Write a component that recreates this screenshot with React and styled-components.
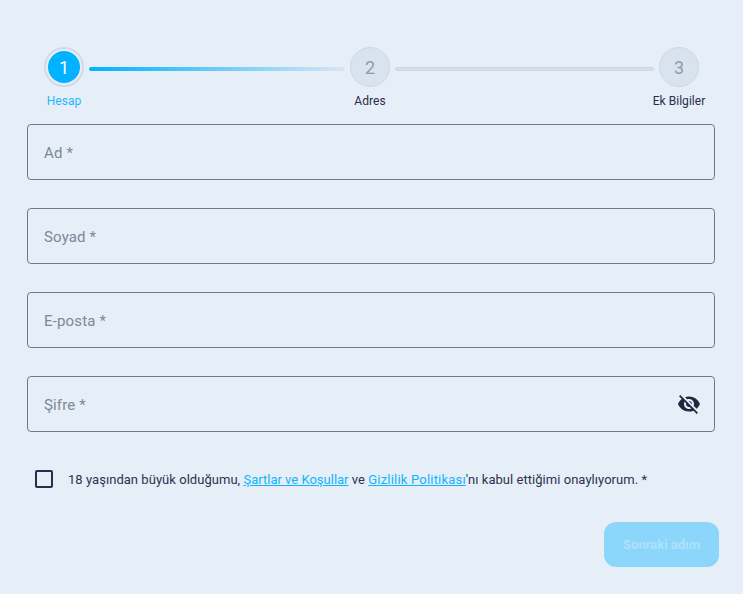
import React from 'react';
import styled, { createGlobalStyle } from 'styled-components';

const GlobalStyle = createGlobalStyle`
body {
  margin: 0;
  background: #e6eef8;
  font-family: Roboto, "Liberation Sans", sans-serif;
}
`;

const Page = styled.div`
  width: 743px;
  height: 594px;
  padding: 47px 28px 0 27px;
  box-sizing: border-box;
  overflow: hidden;
`;

const Stepper = styled.div`
  display: flex;
  align-items: flex-start;
  padding: 0 16px 0 17px;
  height: 77px;
`;

const Step = styled.div`
  width: 40px;
  display: flex;
  flex-direction: column;
  align-items: center;
  flex: none;
`;

const Circle = styled.div`
  width: 40px;
  height: 40px;
  box-sizing: border-box;
  border-radius: 50%;
  display: flex;
  align-items: center;
  justify-content: center;
  font-size: 18px;
  color: ${(props) => (props.$active ? '#fff' : '#8e9bb0')};
  border: ${(props) => (props.$active ? '2px solid #d0dbe7' : '1px solid #ccd8e5')};
  background-color: ${(props) => (props.$active ? '#00b2ff' : '#d8e3ef')};
  background-clip: ${(props) => (props.$active ? 'content-box' : 'border-box')};
  padding: ${(props) => (props.$active ? '2px' : '0')};
`;

const StepLabel = styled.div`
  margin-top: 6px;
  font-size: 12px;
  line-height: 16px;
  letter-spacing: 0.05px;
  white-space: nowrap;
  color: ${(props) => (props.$active ? '#1fb8ff' : '#2b2d4b')};
`;

const Connector = styled.div`
  width: ${(props) => props.$width}px;
  flex: none;
  height: 4px;
  margin: 20px 5px 0;
  border-radius: 2px;
  background: ${(props) =>
    props.$active ? 'linear-gradient(90deg, #00b2ff, #d8e5f1)' : '#d3dfeb'};
  border: ${(props) => (props.$active ? 'none' : '1px solid #ccd8e5')};
  box-sizing: border-box;
`;

const Form = styled.form`
  display: flex;
  flex-direction: column;
  gap: 28px;
`;

const Field = styled.div`
  height: 56px;
  box-sizing: border-box;
  border: 1px solid #73758f;
  border-radius: 4px;
  display: flex;
  align-items: center;
  justify-content: space-between;
  padding: 2px 13px 0 16px;
`;

const Placeholder = styled.span`
  font-size: 15px;
  letter-spacing: 0.15px;
  color: #7e8896;
`;

const EyeIcon = styled.svg`
  width: 24px;
  height: 24px;
  margin-top: -2px;
  fill: #23263f;
`;

const ConsentRow = styled.div`
  display: flex;
  align-items: center;
  margin-top: 10px;
  padding-left: 8px;
  font-size: 13px;
  letter-spacing: 0.04px;
  color: #2f3150;
`;

const Checkbox = styled.span`
  width: 18px;
  height: 18px;
  box-sizing: border-box;
  border: 2px solid #2b2d4b;
  border-radius: 2px;
  margin-right: 15px;
  flex: none;
`;

const TermsLink = styled.a`
  color: #0fb5ff;
  text-decoration: underline;
  letter-spacing: ${(props) => props.$spacing || 0}px;
`;

const Actions = styled.div`
  display: flex;
  justify-content: flex-end;
  margin: 6px -4px 0 0;
`;

const NextButton = styled.button`
  width: 115px;
  height: 45px;
  border: none;
  border-radius: 12px;
  background: #8dd6fb;
  color: #aee2fc;
  font-family: inherit;
  font-size: 13px;
  font-weight: 700;
`;

const App = () => (
  <Page>
    <GlobalStyle />
    <Stepper>
      <Step>
        <Circle $active>1</Circle>
        <StepLabel $active>Hesap</StepLabel>
      </Step>
      <Connector $active $width={256} />
      <Step>
        <Circle>2</Circle>
        <StepLabel>Adres</StepLabel>
      </Step>
      <Connector $width={259} />
      <Step>
        <Circle>3</Circle>
        <StepLabel>Ek Bilgiler</StepLabel>
      </Step>
    </Stepper>
    <Form>
      <Field><Placeholder>Ad *</Placeholder></Field>
      <Field><Placeholder>Soyad *</Placeholder></Field>
      <Field><Placeholder>E-posta *</Placeholder></Field>
      <Field>
        <Placeholder>Şifre *</Placeholder>
        <EyeIcon viewBox="0 0 24 24">
          <path d="M12 7c2.76 0 5 2.24 5 5 0 .65-.13 1.26-.36 1.83l2.92 2.92c1.51-1.26 2.7-2.89 3.43-4.75-1.73-4.39-6-7.5-11-7.5-1.4 0-2.74.25-3.98.7l2.16 2.16C10.74 7.13 11.35 7 12 7zM2 4.27l2.28 2.28.46.46C3.08 8.3 1.78 10.02 1 12c1.73 4.39 6 7.5 11 7.5 1.55 0 3.03-.3 4.38-.84l.42.42L19.73 22 21 20.73 3.27 3 2 4.27zM7.53 9.8l1.55 1.55c-.05.21-.08.43-.08.65 0 1.66 1.34 3 3 3 .22 0 .44-.03.65-.08l1.55 1.55c-.67.33-1.41.53-2.2.53-2.76 0-5-2.24-5-5 0-.79.2-1.53.53-2.2zm4.31-.78l3.15 3.15.02-.16c0-1.66-1.34-3-3-3l-.17.01z" />
        </EyeIcon>
      </Field>
      <ConsentRow>
        <Checkbox />
        <span>
          18 yaşından büyük olduğumu, <TermsLink>Şartlar ve Koşullar</TermsLink> ve{' '}
          <TermsLink $spacing={0.2}>Gizlilik Politikası</TermsLink>'nı kabul ettiğimi onaylıyorum. *
        </span>
      </ConsentRow>
      <Actions>
        <NextButton type="button">Sonraki adım</NextButton>
      </Actions>
    </Form>
  </Page>
);

export default App;
